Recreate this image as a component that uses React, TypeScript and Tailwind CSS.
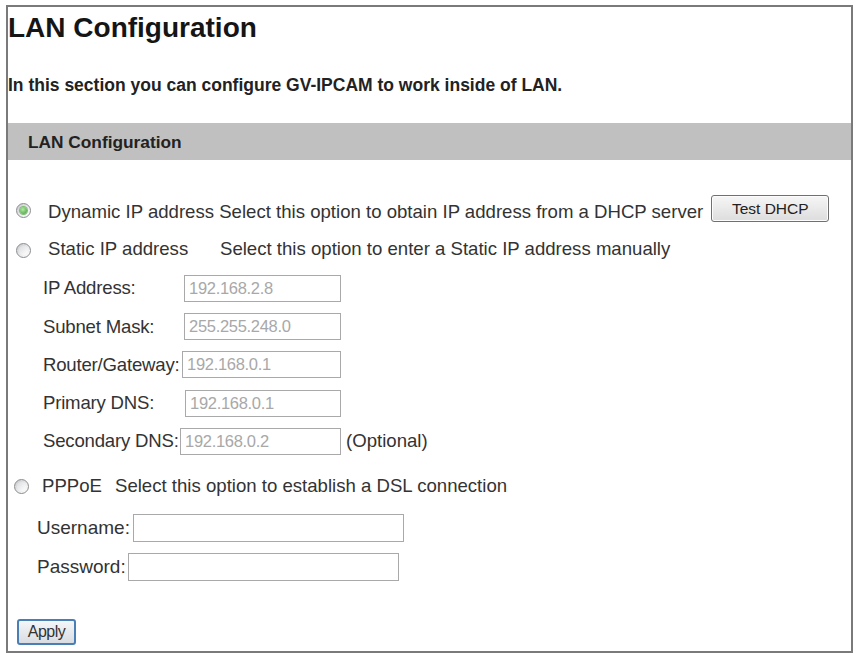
import React from "react";

function Radio({ checked = false, className = "" }: { checked?: boolean; className?: string }) {
  return (
    <div
      className={
        "w-[15px] h-[15px] shrink-0 rounded-full border-[1.5px] border-[#8a8d90] bg-linear-to-br from-[#c4c7ca] via-[#e8e9ea] to-[#ffffff] flex items-center justify-center " +
        className
      }
    >
      {checked ? (
        <div className="w-[7px] h-[7px] rounded-full bg-[radial-gradient(circle_at_40%_35%,#b4eaa6,#3c9a33)] ring-1 ring-[#7cc070]" />
      ) : (
        <div className="w-[9px] h-[9px] rounded-full bg-linear-to-br from-[#dcdddf] to-[#ffffff]" />
      )}
    </div>
  );
}

function Field({
  label,
  value,
  width,
}: {
  label: string;
  value: string;
  width: number;
}) {
  return (
    <div className="w-[298px] h-[27px] flex items-center justify-between">
      <span className="whitespace-nowrap shrink-0 tracking-[-0.2px]">{label}</span>
      <input
        readOnly
        defaultValue={value}
        style={{ width }}
        className="h-[27px] shrink-0 border border-[#a9a9a9] bg-white pl-[4px] text-[16.5px] text-[#a8a8a8] outline-none tracking-[-0.3px]"
      />
    </div>
  );
}

export default function App() {
  return (
    <div className="w-[859px] h-[653px] bg-white overflow-hidden font-['Liberation_Sans',Arial,sans-serif] text-[#333]">
      <div className="ml-[6px] mt-[5px] w-[847px] h-[648px] border-2 border-[#7a7a7a] flex flex-col">
        <h1 className="mt-[5px] text-[28px] leading-[32px] font-bold text-[#151515]">
          LAN Configuration
        </h1>
        <p className="mt-[31px] text-[17.5px] leading-[20px] font-bold text-[#222]">
          In this section you can configure GV-IPCAM to work inside of LAN.
        </p>
        <div className="mt-[28px] h-[37px] bg-[#c0c0c0] flex items-center pl-[20px] text-[17.3px] leading-[20px] font-bold text-[#222]">
          LAN Configuration
        </div>

        <div className="flex flex-col text-[18.6px] leading-[22px]">
          {/* DHCP */}
          <div className="mt-[35px] h-[28px] flex items-start">
            <Radio checked className="ml-[8px] mt-[8px]" />
            <span className="ml-[17px] mt-[6px] whitespace-nowrap">
              Dynamic IP address Select this option to obtain IP address from a DHCP server
            </span>
            <button className="ml-[8px] w-[118px] h-[27px] rounded-[3px] border border-[#707070] bg-linear-to-b from-[#f6f6f6] to-[#dddddd] text-[15.5px] leading-[20px] text-[#222] shadow-[inset_0_0_0_1px_#fcfcfc]">
              Test DHCP
            </button>
          </div>

          {/* Static */}
          <div className="mt-[14.6px] h-[22px] flex items-start">
            <Radio className="ml-[8px] mt-[5px]" />
            <span className="ml-[17px] w-[172px] whitespace-nowrap">Static IP address</span>
            <span className="whitespace-nowrap">Select this option to enter a Static IP address manually</span>
          </div>

          <div className="mt-[15.4px] pl-[35px] flex flex-col gap-[11.25px]">
            <Field label="IP Address:" value="192.168.2.8" width={157} />
            <Field label="Subnet Mask:" value="255.255.248.0" width={157} />
            <Field label="Router/Gateway:" value="192.168.0.1" width={159} />
            <Field label="Primary DNS:" value="192.168.0.1" width={156} />
            <div className="flex items-center">
              <Field label="Secondary DNS:" value="192.168.0.2" width={161} />
              <span className="ml-[5px] whitespace-nowrap">(Optional)</span>
            </div>
          </div>

          {/* PPPoE */}
          <div className="mt-[19.6px] h-[22px] flex items-start">
            <Radio className="ml-[6px] mt-[4px]" />
            <span className="ml-[13px] w-[73px]">PPPoE</span>
            <span className="whitespace-nowrap">Select this option to establish a DSL connection</span>
          </div>

          <div className="mt-[17.4px] ml-[29px] h-[28px] flex items-center">
            <span className="w-[96px] shrink-0 whitespace-nowrap text-[19px]">Username:</span>
            <input readOnly className="w-[271px] h-[28px] border border-[#a9a9a9] bg-white outline-none" />
          </div>
          <div className="mt-[11px] ml-[29px] h-[28px] flex items-center">
            <span className="w-[91px] shrink-0 whitespace-nowrap text-[19px]">Password:</span>
            <input readOnly type="password" className="w-[271px] h-[28px] border border-[#a9a9a9] bg-white outline-none" />
          </div>

          <div className="mt-[38px] ml-[9px]">
            <button className="w-[59px] h-[26px] rounded-[3px] border-2 border-[#4a7fb5] bg-linear-to-b from-[#f4f6f8] to-[#d9dde2] text-[16px] leading-[20px] text-[#333] tracking-[-0.5px]">
              Apply
            </button>
          </div>
        </div>
      </div>
    </div>
  );
}
